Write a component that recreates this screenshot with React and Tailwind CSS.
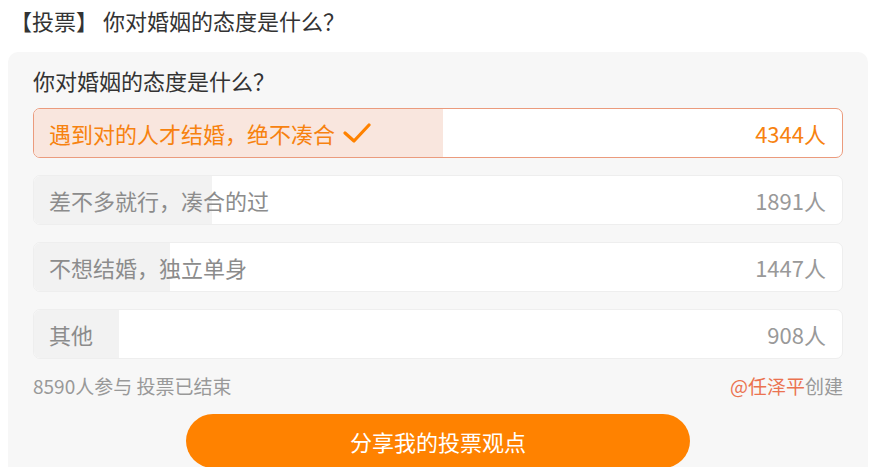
import React from 'react';

const options = [
  { label: '遇到对的人才结婚，绝不凑合', count: 4344, chosen: true },
  { label: '差不多就行，凑合的过', count: 1891 },
  { label: '不想结婚，独立单身', count: 1447 },
  { label: '其他', count: 908 },
];

const total = 8590;

const Check = () => (
  <svg width="28" height="22" viewBox="0 0 28 22" className="ml-[8px]">
    <path d="M2 11 L11 19 L26 3" fill="none" stroke="#ff8200" strokeWidth="3.2" strokeLinecap="round" strokeLinejoin="round" />
  </svg>
);

const OptionRow = ({ option }) => {
  const pct = (option.count / total) * 100;
  return (
    <div
      className={`relative h-[50px] rounded-[7px] overflow-hidden bg-white border ${
        option.chosen ? 'border-[#eb9b7d]' : 'border-[#eeeeee]'
      }`}
    >
      {/* 进度条 */}
      <div
        className={`absolute left-0 top-0 bottom-0 ${option.chosen ? 'bg-[#f9e6de]' : 'bg-[#f2f2f2]'}`}
        style={{ width: `${pct}%` }}
      />
      <div className="relative h-full flex items-center justify-between pl-[15px] pr-[16px] text-[22px]">
        <div className={`flex items-center ${option.chosen ? 'text-[#f7820f]' : 'text-[#8c8c8c]'}`}>
          <span>{option.label}</span>
          {option.chosen && <Check />}
        </div>
        <span className={option.chosen ? 'text-[#f7820f]' : 'text-[#999999]'}>{option.count}人</span>
      </div>
    </div>
  );
};

export default function App() {
  return (
    <div
      className="w-[870px] h-[467px] overflow-hidden bg-white"
      style={{ fontFamily: '"Noto Sans CJK SC", "Noto Sans", sans-serif' }}
    >
      <div className="h-[40px] flex items-center pl-[10px] text-[22px] text-[#333333]">
        【投票】 你对婚姻的态度是什么？
      </div>

      <div className="mt-[12px] ml-[8px] w-[860px] rounded-t-[10px] bg-[#f7f7f7] px-[25px] pt-[14px] h-[500px]">
        <div className="h-[28px] flex items-center text-[22px] text-[#333333] mb-[14px]">
          你对婚姻的态度是什么？
        </div>

        <div className="flex flex-col gap-[17px]">
          {options.map((o) => (
            <OptionRow key={o.label} option={o} />
          ))}
        </div>

        <div className="mt-[15px] h-[24px] flex items-center justify-between text-[19px] text-[#999999]">
          <span>8590人参与 投票已结束</span>
          <span>
            <span className="text-[#eb7350]">@任泽平</span>创建
          </span>
        </div>

        <div className="mt-[16px] flex justify-center">
          <button className="w-[504px] h-[54px] rounded-full bg-[#ff8200] text-white text-[22px]">
            分享我的投票观点
          </button>
        </div>
      </div>
    </div>
  );
}
